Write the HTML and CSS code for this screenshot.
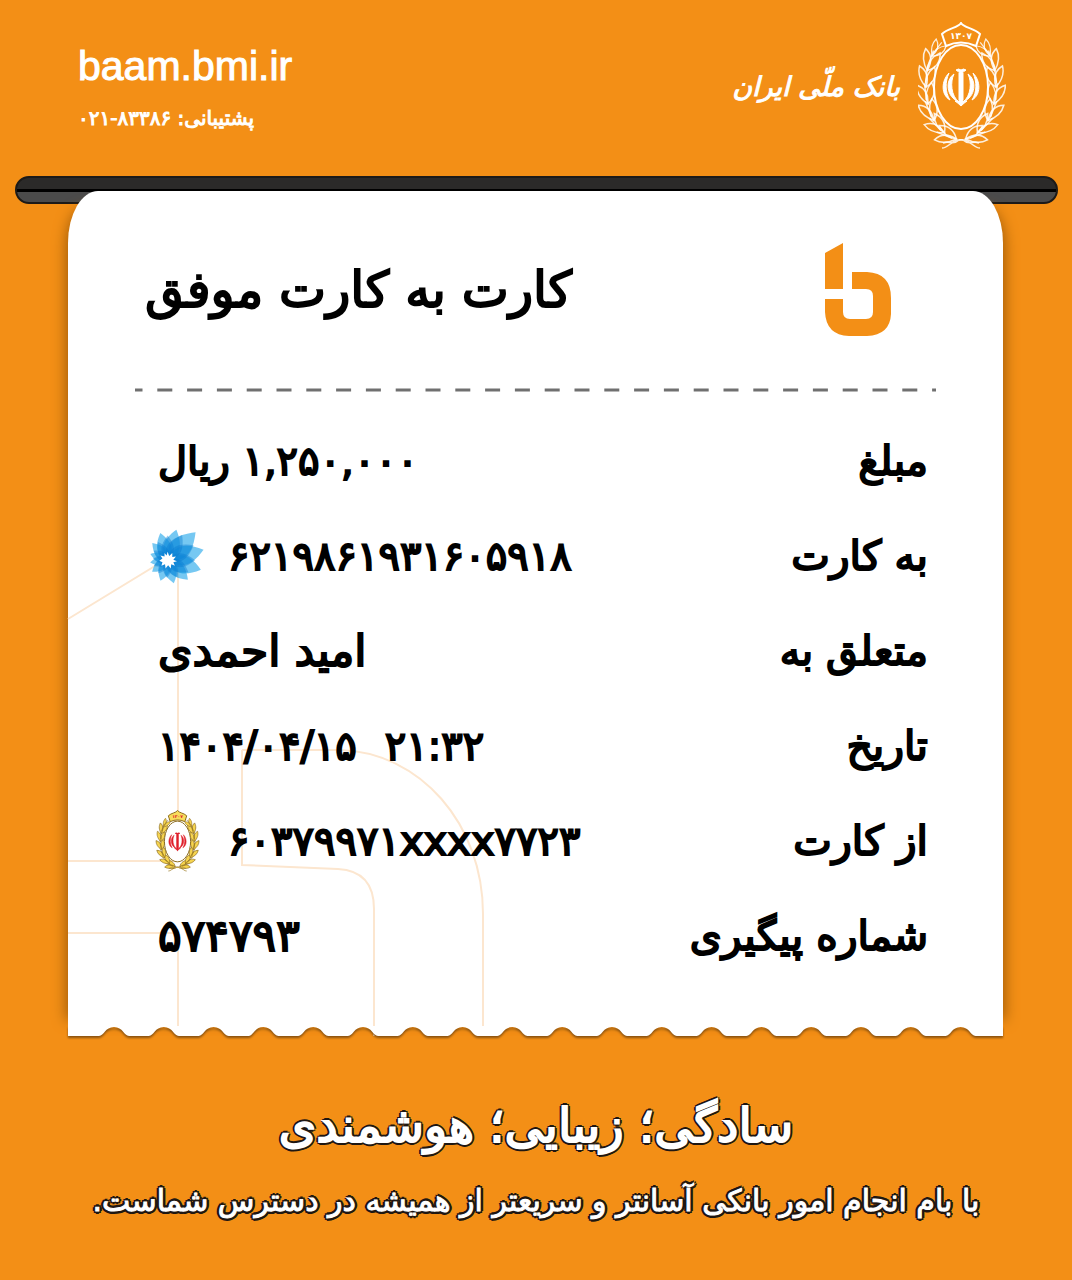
FILE: index.html
```html
<!DOCTYPE html>
<html lang="fa" dir="rtl">
<head>
<meta charset="utf-8">
<meta name="viewport" content="width=device-width, initial-scale=1">
<title>کارت به کارت موفق</title>
<link rel="stylesheet" href="styles.css">
</head>
<body>
<svg class="defs" aria-hidden="true">
  <defs>
    <g id="leaf">
      <path d="M0 8C-8 2-9-6-6-13C-1-8 3-2 0 8Z"/>
      <path d="M0 8C7 2 10-4 9-12C2-9-2-3 0 8Z"/>
      <path d="M1 4V-13"/>
    </g>
    <g id="branch">
      <use href="#leaf" transform="translate(12 114) rotate(68)"/>
      <use href="#leaf" transform="translate(22 105) rotate(44)"/>
      <use href="#leaf" transform="translate(30 91) rotate(22)"/>
      <use href="#leaf" transform="translate(34 74) rotate(7)"/>
      <use href="#leaf" transform="translate(34 57) rotate(-7)"/>
      <use href="#leaf" transform="translate(31 41) rotate(-20)"/>
      <use href="#leaf" transform="translate(25 29) rotate(-38) scale(.8)"/>
      <path d="M2 118C8 124 12 118 18 121M-2 118C8 116 12 126 19 126"/>
    </g>
    <symbol id="emblem" viewBox="0 0 88 128">
      <g class="wreath">
        <use href="#branch" transform="translate(43 0)"/>
        <use href="#branch" transform="translate(43 0) scale(-1 1)"/>
      </g>
      <ellipse class="oval" cx="43" cy="65" rx="27" ry="42"/>
      <path class="crest" d="M43 1C40 6 30 6 24 12L28 24Q43 17 58 24L62 12C56 6 46 6 43 1Z"/>
      <text class="year" x="43" y="17" text-anchor="middle">۱۳۰۷</text>
      <g class="sign">
        <path d="M43 48L41 51V78L43 84L45 78V51Z"/>
        <path d="M38 48Q40.500 46 43 48Q45.500 46 48 48Q45.500 51 43 49Q40.500 51 38 48Z"/>
        <path d="M36 52C27 58 28 75 41 80C33 74 32 60 36 52Z"/>
        <path d="M50 52C59 58 58 75 45 80C53 74 54 60 50 52Z"/>
        <path d="M31 51C23 59 23 73 32 78C27 70 27 60 31 51Z"/>
        <path d="M55 51C63 59 63 73 54 78C59 70 59 60 55 51Z"/>
        <path d="M37 79Q41 79 43 82Q45 79 49 79Q46 81 43 84Q40 81 37 79Z"/>
      </g>
    </symbol>
    <path id="petal" d="M0 0C-12-10-11-20 0-34C11-20 12-10 0 0Z"/>
    <symbol id="flower" viewBox="0 0 54 54">
      <g class="petals" transform="translate(17 31)">
        <use href="#petal" transform="rotate(16) scale(.9)"/>
        <use href="#petal" transform="rotate(45) scale(1.120)"/>
        <use href="#petal" transform="rotate(74) scale(1.060)"/>
        <use href="#petal" transform="rotate(106) scale(.98)"/>
        <use href="#petal" transform="rotate(134) scale(.8)"/>
        <use href="#petal" transform="rotate(165) scale(.68) "/>
        <use href="#petal" transform="rotate(199) scale(.62)"/>
        <use href="#petal" transform="rotate(233) scale(.55)"/>
        <use href="#petal" transform="rotate(262) scale(.5)"/>
        <use href="#petal" transform="rotate(290) scale(.52)"/>
        <use href="#petal" transform="rotate(318) scale(.65)"/>
        <use href="#petal" transform="rotate(345) scale(.8)"/>
      </g>
      <g class="petals-inner" transform="translate(17 31)">
        <use href="#petal" transform="rotate(0) scale(.7)"/>
        <use href="#petal" transform="rotate(30) scale(.82)"/>
        <use href="#petal" transform="rotate(60) scale(.85)"/>
        <use href="#petal" transform="rotate(90) scale(.78)"/>
        <use href="#petal" transform="rotate(120) scale(.68)"/>
        <use href="#petal" transform="rotate(150) scale(.56)"/>
        <use href="#petal" transform="rotate(182) scale(.5)"/>
        <use href="#petal" transform="rotate(216) scale(.46)"/>
        <use href="#petal" transform="rotate(248) scale(.42)"/>
        <use href="#petal" transform="rotate(276) scale(.42)"/>
        <use href="#petal" transform="rotate(304) scale(.48)"/>
        <use href="#petal" transform="rotate(332) scale(.58)"/>
      </g>
      <path fill="#fff" d="M17 23L18.500 27L21.500 24L21.500 28L25 27.500L22.500 30.500L26 32L22.500 33L24 36.500L20.500 35L20 39L17.500 36L15 39L14.500 35L11 36.500L12 33L9 31.500L12 29.500L10 26.500L14 27.500L14 24L16 26.500Z"/>
    </symbol>
  </defs>
</svg>

<header class="bank">
  <div class="brand">
    <svg class="brand-emblem" aria-hidden="true"><use href="#emblem"/></svg>
    <p class="brand-name">بانک ملّی ایران</p>
  </div>
  <div class="contact">
    <a class="site" href="#" dir="ltr">baam.bmi.ir</a>
    <p class="support">پشتیبانی: <bdi dir="ltr">۰۲۱-۸۳۳۸۶</bdi></p>
  </div>
</header>

<main>
  <div class="roller"></div>
  <section class="receipt">
    <div class="paper">
      <svg class="watermark" viewBox="0 0 418 472" aria-hidden="true">
        <path d="M0 55L110-12V297H0M0 369H110V472M174 186V301L270 305Q306 307 306 345V472M174 186H272C352 188 415 260 415 350V472"/>
      </svg>
      <div class="title-row">
        <svg class="logo" viewBox="0 0 66 94" role="img" aria-label="بام">
          <path d="M0 10L18 0V46H0ZM27 29H42Q66 30 66 55V71Q65 92 42 93H24Q1 92 0 69V56H18V69Q18 76 25 76H41Q48 76 48 69V53Q48 46 41 46H27Z"/>
        </svg>
        <h1>کارت به کارت موفق</h1>
      </div>
      <svg class="divider" height="4" aria-hidden="true"><line x1="0" y1="2" x2="100%" y2="2"/></svg>
      <dl class="details">
        <div><dt>مبلغ</dt><dd>۱,۲۵۰,۰۰۰ ریال</dd></div>
        <div><dt>به کارت</dt><dd class="card"><bdi>۶۲۱۹۸۶۱۹۳۱۶۰۵۹۱۸</bdi><svg class="card-icon" aria-hidden="true"><use href="#flower"/></svg></dd></div>
        <div><dt>متعلق به</dt><dd class="large">امید احمدی</dd></div>
        <div><dt>تاریخ</dt><dd class="date" dir="ltr"><bdi dir="ltr">۱۴۰۴/۰۴/۱۵</bdi><bdi dir="ltr">۲۱:۳۲</bdi></dd></div>
        <div><dt>از کارت</dt><dd class="card"><bdi dir="ltr">۶۰۳۷۹۹۷۱xxxx۷۷۲۳</bdi><svg class="card-icon gold" aria-hidden="true"><use href="#emblem"/></svg></dd></div>
        <div><dt>شماره پیگیری</dt><dd class="large">۵۷۴۷۹۳</dd></div>
      </dl>
    </div>
    <svg class="torn" viewBox="0 0 935 11" preserveAspectRatio="none" aria-hidden="true">
      <path d="M0 0V10h31c5 0 6-9 15-9s10 9 15 9h19.800c5 0 6-9 15-9s10 9 15 9h19.800c5 0 6-9 15-9s10 9 15 9h19.800c5 0 6-9 15-9s10 9 15 9h19.800c5 0 6-9 15-9s10 9 15 9h19.800c5 0 6-9 15-9s10 9 15 9h19.800c5 0 6-9 15-9s10 9 15 9h19.800c5 0 6-9 15-9s10 9 15 9h19.800c5 0 6-9 15-9s10 9 15 9h19.800c5 0 6-9 15-9s10 9 15 9h19.800c5 0 6-9 15-9s10 9 15 9h19.800c5 0 6-9 15-9s10 9 15 9h19.800c5 0 6-9 15-9s10 9 15 9h19.800c5 0 6-9 15-9s10 9 15 9h19.800c5 0 6-9 15-9s10 9 15 9h19.800c5 0 6-9 15-9s10 9 15 9h19.800c5 0 6-9 15-9s10 9 15 9h19.800c5 0 6-9 15-9s10 9 15 9H935V0Z"/>
    </svg>
  </section>
</main>

<footer class="slogan">
  <p class="slogan-main">سادگی؛ زیبایی؛ هوشمندی</p>
  <p class="slogan-sub">با بام انجام امور بانکی آسانتر و سریعتر از همیشه در دسترس شماست.</p>
</footer>
</body>
</html>
```
FILE: styles.css
```css
* {
  box-sizing: border-box;
}

body {
  margin: 0;
  min-height: 100vh;
  background: #f38f16;
  color: #000;
  font-family: "DejaVu Sans", sans-serif;
}

h1, p, dl, dd {
  margin: 0;
}

.defs {
  position: absolute;
  width: 0;
  height: 0;
}

.bank {
  display: flex;
  justify-content: space-between;
  align-items: flex-start;
  height: 176px;
  padding: 22px 66px 0 78px;
  color: #fff;
}

.brand {
  display: flex;
  align-items: center;
  gap: 18px;
}

.brand-emblem {
  --line: #fff;
  --leaf: none;
  --crest: #f38f16;
  --oval: #f38f16;
  --sign: #fff;
  width: 88px;
  height: 128px;
}

.brand-name {
  font-size: 27px;
  font-style: italic;
  -webkit-text-stroke: 1px #fff;
}

.wreath {
  fill: var(--leaf);
  stroke: var(--line);
  stroke-width: 1.5;
  stroke-opacity: .85;
}

.oval {
  fill: var(--oval);
  stroke: var(--line);
  stroke-width: 2;
}

.crest {
  fill: var(--crest);
  stroke: var(--line);
  stroke-width: 2;
}

.year {
  fill: var(--sign);
  font-size: 9px;
  font-weight: bold;
}

.sign {
  fill: var(--sign);
  stroke: var(--sign);
}

.contact {
  display: flex;
  flex-direction: column;
  align-items: flex-end;
  padding-top: 20px;
}

.site {
  color: inherit;
  font-family: "Liberation Sans", sans-serif;
  font-size: 41px;
  line-height: 48px;
  text-decoration: none;
  -webkit-text-stroke: 1px #fff;
}

.support {
  font-size: 20px;
  line-height: 56px;
  -webkit-text-stroke: 1px #fff;
}

.roller {
  height: 28px;
  margin: 0 14px 0 15px;
  border: 2px solid #1c1a18;
  border-radius: 14px;
  background: linear-gradient(#2b2a29 0 11px, #000 11px 14px, #4b4b4b 14px);
}

.receipt {
  position: relative;
  margin: -13px 69px 0 68px;
}

.paper {
  position: relative;
  padding: 52px 67px 43px;
  border-radius: 30px 30px 0 0 / 52px 52px 0 0;
  background: #fff;
  box-shadow: 14px 6px 14px -12px #a05c08, -14px 6px 14px -12px #a05c08;
}

.watermark {
  position: absolute;
  left: 0;
  bottom: -10px;
  width: 418px;
  height: 472px;
  overflow: visible;
  fill: none;
  stroke: #fce6cf;
  stroke-width: 2;
}

.title-row {
  position: relative;
  display: flex;
  justify-content: space-between;
  align-items: center;
  height: 94px;
  padding: 0 45px 0 10px;
}

.logo {
  width: 66px;
  height: 94px;
  fill: #f38f16;
}

h1 {
  font-size: 50px;
  font-weight: normal;
  line-height: 80px;
  -webkit-text-stroke: 2px #000;
}

.divider {
  display: block;
  width: 100%;
  margin: 51px 0 21px;
}

.divider line {
  stroke: #707070;
  stroke-width: 3;
  stroke-dasharray: 15 14.8;
  stroke-dashoffset: 7.5;
}

.details {
  position: relative;
  padding: 0 8px 0 23px;
  font-size: 40px;
  -webkit-text-stroke: 2px #000;
}

.details > div {
  display: flex;
  justify-content: space-between;
  align-items: center;
  height: 95px;
}

.details dt {
  font-size: 41px;
}

.details .large {
  font-size: 44px;
}

.card {
  display: flex;
  align-items: center;
  gap: 22px;
  margin-left: -8px;
}

.card-icon {
  width: 56px;
  height: 56px;
  -webkit-text-stroke: 0;
}

.gold {
  --line: #8a6a1c;
  --leaf: #f6d44f;
  --crest: #f8dc5c;
  --oval: #fff;
  --sign: #e0202b;
  height: 62px;
}

.date {
  display: flex;
  gap: 28px;
}

.petals {
  fill: #1aa3ea;
  fill-opacity: .6;
}

.petals-inner {
  fill: #0878cf;
  fill-opacity: .4;
}

.torn {
  position: relative;
  display: block;
  width: 100%;
  height: 11px;
  overflow: visible;
  fill: #fff;
  filter: drop-shadow(0 2px 1px #8a5210);
}

.slogan {
  padding: 48px 16px 32px;
  color: #fff;
  text-align: center;
  text-shadow:
    3px 0 #1f1712, -3px 0 #1f1712, 0 3px #1f1712, 0 -3px #1f1712,
    2px 2px #1f1712, -2px 2px #1f1712, 2px -2px #1f1712, -2px -2px #1f1712;
}

.slogan-main {
  font-size: 48px;
  line-height: 80px;
  -webkit-text-stroke: 2px #fff;
}

.slogan-sub {
  font-size: 30px;
  line-height: 72px;
  -webkit-text-stroke: 1px #fff;
}
```
